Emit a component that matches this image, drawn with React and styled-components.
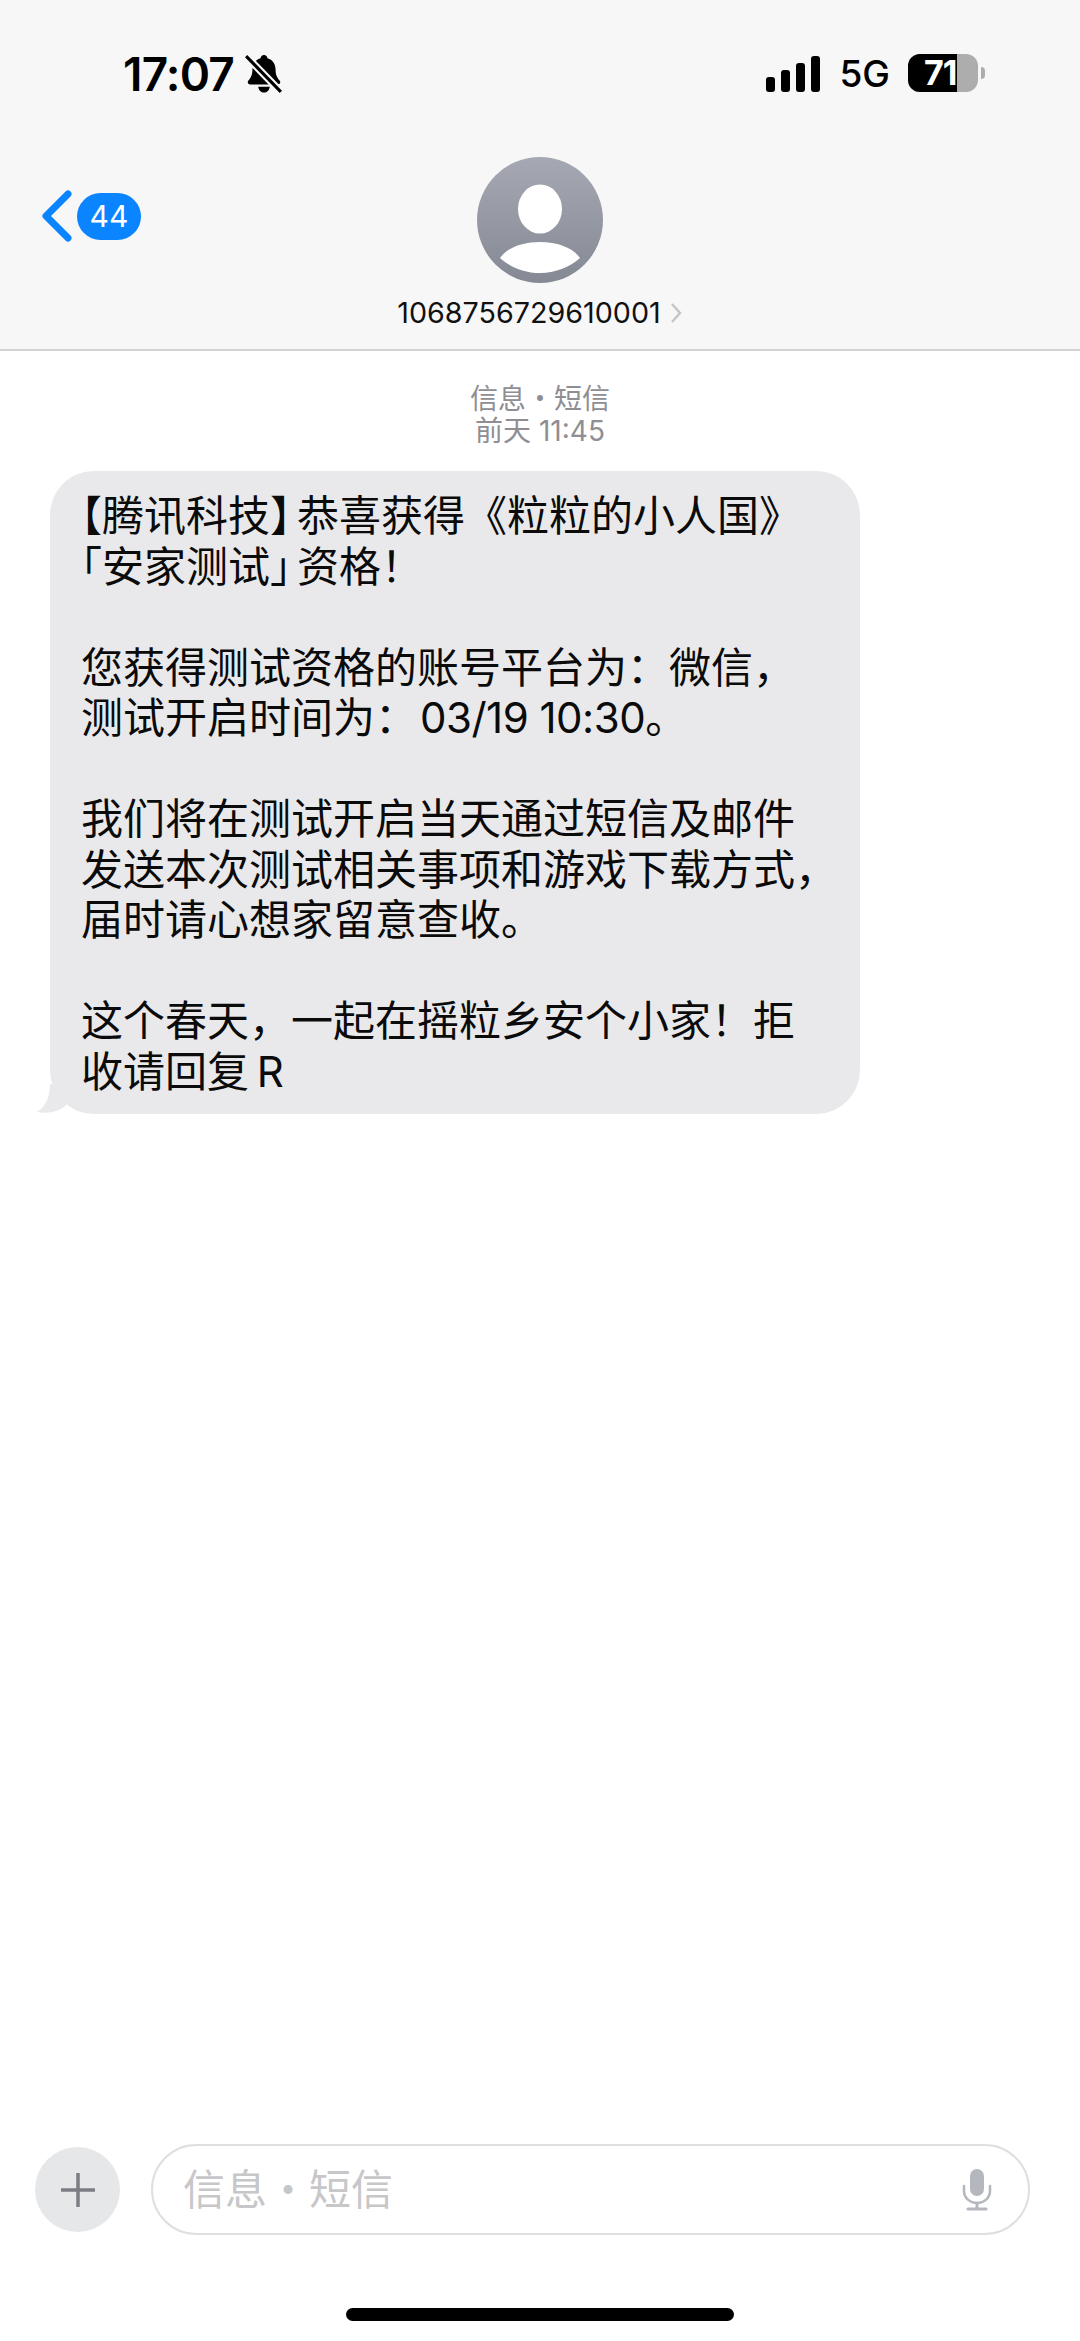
import React from 'react'
import styled, { createGlobalStyle } from 'styled-components'

const GlobalStyle = createGlobalStyle`
  html, body { margin: 0; padding: 0; background: #fff; }
  body { font-family: Inter, "Noto Sans CJK SC", sans-serif; }
`

const Screen = styled.div`
  width: 1080px;
  height: 2341px;
  display: flex;
  flex-direction: column;
  overflow: hidden;
  background: #fff;
`

const Header = styled.header`
  height: 349px;
  background: #f7f7f7;
  border-bottom: 2px solid #d2d2d4;
  box-sizing: content-box;
  display: flex;
  flex-direction: column;
`

const StatusBar = styled.div`
  height: 157px;
  padding: 51px 95px 0 123px;
  box-sizing: border-box;
  display: flex;
  justify-content: space-between;
  align-items: flex-start;
`

const StatusGroup = styled.div`
  display: flex;
  align-items: center;
  height: 46px;
  gap: ${props => props.gap || 0}px;
`

const Time = styled.span`
  font-size: 46px;
  font-weight: 600;
  line-height: 46px;
  letter-spacing: -0.8px;
  color: #000;
`

const NetworkLabel = styled.span`
  font-size: 37px;
  font-weight: 500;
  line-height: 46px;
  margin: 0 18px 0 19px;
  color: #000;
`

const Battery = styled.div`
  position: relative;
  width: 70px;
  height: 38px;
  border-radius: 12px;
  background: #adadad;
  display: flex;
  align-items: center;
  margin-top: -3px;
`

const BatteryFill = styled.div`
  height: 100%;
  border-radius: 12px 0 0 12px;
  background: #000;
`

const BatteryLabel = styled.span`
  position: absolute;
  left: 16px;
  top: 0;
  font-size: 34px;
  line-height: 38px;
  font-weight: 700;
  color: #fff;
  letter-spacing: -1px;
`

const BatteryCap = styled.div`
  width: 4px;
  height: 12px;
  margin: -3px 0 0 3px;
  border-radius: 0 4px 4px 0;
  background: #adadad;
`

const Nav = styled.div`
  position: relative;
  display: flex;
  flex-direction: column;
  align-items: center;
`

const Back = styled.div`
  position: absolute;
  left: 42px;
  top: 33px;
  display: flex;
  align-items: center;
  gap: 5px;
`

const CountBadge = styled.span`
  width: 64px;
  height: 47px;
  border-radius: 24px;
  background: #0a84ff;
  color: #fff;
  font-size: 30px;
  line-height: 47px;
  text-align: center;
`

const ContactName = styled.div`
  display: flex;
  align-items: center;
  gap: 9px;
  margin: 13px 0 0 -1px;
  font-size: 28.7px;
  line-height: 34px;
  color: #111;
`

const Thread = styled.main`
  flex: 1;
  display: flex;
  flex-direction: column;
  padding-top: 32px;
`

const Stamp = styled.div`
  font-size: 28px;
  line-height: 32px;
  font-weight: 400;
  text-align: center;
  color: #8e8e93;
`

const BubbleRow = styled.div`
  position: relative;
  margin: 24px 0 0 50px;
  width: 810px;
`

const Bubble = styled.div`
  background: #e9e9eb;
  border-radius: 44px;
  padding: 20px 0 17px 31px;
  color: #0b0b0b;
  font-size: 42px;
`

const Line = styled.div`
  height: 50.5px;
  line-height: 50.5px;
  white-space: nowrap;
`

const Bracket = styled.span`
  font-feature-settings: "halt";
  ${props => props.close ? `margin-right: 6px;` : null}
`

const Latin = styled.span`
  margin-left: 3px;
  letter-spacing: -0.5px;
`

const Tail = styled.svg`
  position: absolute;
  left: -14px;
  bottom: 0;
`

const Composer = styled.div`
  display: flex;
  align-items: center;
  gap: 31px;
  padding: 0 50px 0 35px;
`

const PlusButton = styled.div`
  width: 85px;
  height: 85px;
  border-radius: 50%;
  background: #e6e7e9;
  display: flex;
  align-items: center;
  justify-content: center;
`

const InputField = styled.div`
  flex: 1;
  height: 91px;
  box-sizing: border-box;
  border: 2px solid #dedfe0;
  border-radius: 46px;
  padding: 0 36px 0 30px;
  display: flex;
  align-items: center;
  justify-content: space-between;
`

const Placeholder = styled.span`
  font-size: 42px;
  line-height: 50px;
  color: #c7c7c9;
`

const HomeBar = styled.div`
  width: 388px;
  height: 13px;
  border-radius: 7px;
  background: #000;
  margin: 73px auto 20px;
`

const MutedBell = () => (
  <svg width="38" height="40" viewBox="0 0 36 38">
    <path d="M18 1c2 0 3 1.300 3.300 3 5 1.400 7.700 5.500 7.700 11 0 5 1.500 7.500 4 10.500 1 1.500.3 3.500-2 3.500H5c-2.300 0-3-2-2-3.500C5.500 22.500 7 20 7 15c0-5.500 2.700-9.600 7.700-11C15 2.300 16 1 18 1z" fill="#000" />
    <path d="M12.500 31h11c-.5 3.500-2.800 5.500-5.500 5.500s-5-2-5.500-5.500z" fill="#000" />
    <path d="M1 2l33 34" stroke="#f7f7f7" strokeWidth="7" />
    <path d="M1 2l33 34" stroke="#000" strokeWidth="3" />
  </svg>
)

const SignalBars = () => (
  <svg width="54" height="36" viewBox="0 0 54 36">
    <rect x="0" y="21" width="9" height="15" rx="3" fill="#000" />
    <rect x="15" y="14" width="9" height="22" rx="3" fill="#000" />
    <rect x="30" y="7" width="9" height="29" rx="3" fill="#000" />
    <rect x="45" y="0" width="9" height="36" rx="3" fill="#000" />
  </svg>
)

const BackChevron = () => (
  <svg width="30" height="52" viewBox="0 0 30 52">
    <path d="M26 4L4 26l22 22" fill="none" stroke="#0a84ff" strokeWidth="7" strokeLinecap="round" strokeLinejoin="round" />
  </svg>
)

const Avatar = () => (
  <svg width="126" height="126" viewBox="0 0 126 126">
    <defs>
      <linearGradient id="avatarFill" x1="0" y1="0" x2="0" y2="1">
        <stop offset="0" stopColor="#a6a9b4" />
        <stop offset="1" stopColor="#858994" />
      </linearGradient>
    </defs>
    <circle cx="63" cy="63" r="63" fill="url(#avatarFill)" />
    <ellipse cx="63" cy="52" rx="22" ry="24.500" fill="#fff" />
    <path d="M23 101c7-10 22-16 40-16s33 6 40 16c-9 8-23 15-40 15s-31-7-40-15z" fill="#fff" />
  </svg>
)

const NameChevron = () => (
  <svg width="12" height="22" viewBox="0 0 12 22">
    <path d="M2 2l8 9-8 9" fill="none" stroke="#c6c6c8" strokeWidth="2.500" />
  </svg>
)

const Plus = () => (
  <svg width="34" height="34" viewBox="0 0 34 34">
    <path d="M17 1v32M1 17h32" stroke="#7c7d83" strokeWidth="3.500" strokeLinecap="round" />
  </svg>
)

const Mic = () => (
  <svg width="30" height="42" viewBox="0 0 30 42">
    <rect x="8" y="0" width="14" height="27" rx="7" fill="#b4b7bd" />
    <path d="M2 17v5c0 7 6 12 13 12s13-5 13-12v-5" fill="none" stroke="#b4b7bd" strokeWidth="2.500" strokeLinecap="round" />
    <path d="M15 34v5M6 40h18" stroke="#b4b7bd" strokeWidth="3" strokeLinecap="round" />
  </svg>
)

const App = () => {
  return (
    <Screen>
      <GlobalStyle />
      <Header>
        <StatusBar>
          <StatusGroup gap={11}>
            <Time>17:07</Time>
            <MutedBell />
          </StatusGroup>
          <StatusGroup>
            <SignalBars />
            <NetworkLabel>5G</NetworkLabel>
            <Battery>
              <BatteryFill style={{ width: '70%' }} />
              <BatteryLabel>71</BatteryLabel>
            </Battery>
            <BatteryCap />
          </StatusGroup>
        </StatusBar>
        <Nav>
          <Back>
            <BackChevron />
            <CountBadge>44</CountBadge>
          </Back>
          <Avatar />
          <ContactName>
            1068756729610001
            <NameChevron />
          </ContactName>
        </Nav>
      </Header>
      <Thread>
        <Stamp>信息・短信</Stamp>
        <Stamp>前天 11:45</Stamp>
        <BubbleRow>
          <Tail width="44" height="30" viewBox="0 0 44 30">
            <path d="M14 0C14 12 10 23 1 28C12 30 24 28 31 20L44 0z" fill="#e9e9eb" />
          </Tail>
          <Bubble>
            <Line><Bracket>【</Bracket>腾讯科技<Bracket close>】</Bracket>恭喜获得《粒粒的小人国》</Line>
            <Line><Bracket>「</Bracket>安家测试<Bracket close>」</Bracket>资格<Bracket>！</Bracket></Line>
            <Line />
            <Line>您获得测试资格的账号平台为：微信，</Line>
            <Line>测试开启时间为：<Latin>03/19 10:30</Latin>。</Line>
            <Line />
            <Line>我们将在测试开启当天通过短信及邮件</Line>
            <Line>发送本次测试相关事项和游戏下载方式，</Line>
            <Line>届时请心想家留意查收。</Line>
            <Line />
            <Line>这个春天，一起在摇粒乡安个小家！拒</Line>
            <Line>收请回复&#8201;R</Line>
          </Bubble>
        </BubbleRow>
      </Thread>
      <Composer>
        <PlusButton><Plus /></PlusButton>
        <InputField>
          <Placeholder>信息・短信</Placeholder>
          <Mic />
        </InputField>
      </Composer>
      <HomeBar />
    </Screen>
  )
}

export default App
